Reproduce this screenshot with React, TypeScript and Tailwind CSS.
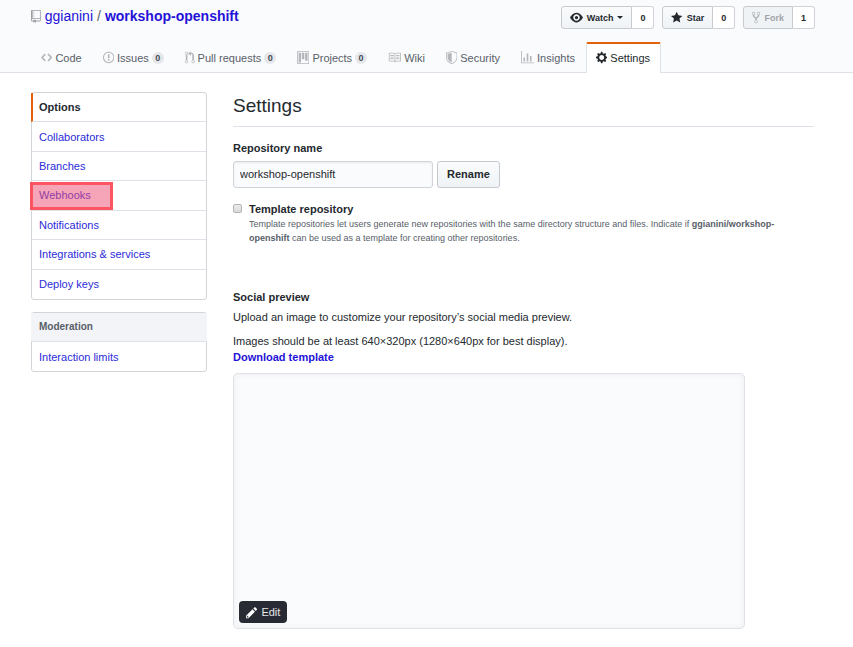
import type { ReactNode } from "react";

const icons = {
  repo: { w: 12, d: "M4 9H3V8h1v1zm0-3H3v1h1V6zm0-2H3v1h1V4zm0-2H3v1h1V2zm8-1v12c0 .55-.45 1-1 1H6v2l-1.5-1.5L3 16v-2H1c-.55 0-1-.45-1-1V1c0-.55.45-1 1-1h10c.55 0 1 .45 1 1zm-1 10H1v2h2v-1h3v1h5v-2zm0-10H2v9h9V1z" },
  code: { w: 14, d: "M9.5 3L8 4.5 11.5 8 8 11.5 9.5 13 14 8 9.5 3zm-5 0L0 8l4.5 5L6 11.5 2.5 8 6 4.5 4.5 3z" },
  issue: { w: 14, d: "M7 2.3c3.14 0 5.7 2.56 5.7 5.7s-2.56 5.7-5.7 5.7A5.71 5.71 0 0 1 1.3 8c0-3.14 2.56-5.7 5.7-5.7zM7 1C3.14 1 0 4.14 0 8s3.14 7 7 7 7-3.14 7-7-3.14-7-7-7zm1 3H6v5h2V4zm0 6H6v2h2v-2z" },
  pull: { w: 12, d: "M11 11.28V5c-.03-.78-.34-1.47-.94-2.06C9.46 2.35 8.78 2.03 8 2H7V0L4 3l3 3V4h1c.27.02.48.11.69.31.21.2.3.42.31.69v6.28A1.993 1.993 0 0 0 10 15a1.993 1.993 0 0 0 1-3.72zm-1 2.92c-.66 0-1.2-.55-1.2-1.2 0-.65.55-1.2 1.2-1.2.65 0 1.2.55 1.2 1.2 0 .65-.55 1.2-1.2 1.2zM4 3c0-1.11-.89-2-2-2a1.993 1.993 0 0 0-1 3.72v6.56A1.993 1.993 0 0 0 2 15a1.993 1.993 0 0 0 1-3.72V4.72c.59-.34 1-.98 1-1.72zm-.8 10c0 .66-.55 1.2-1.2 1.2-.65 0-1.2-.55-1.2-1.2 0-.65.55-1.2 1.2-1.2.65 0 1.2.55 1.2 1.2zM2 4.2C1.34 4.2.8 3.65.8 3c0-.65.55-1.2 1.2-1.2.65 0 1.2.55 1.2 1.2 0 .65-.55 1.2-1.2 1.2z" },
  project: { w: 15, d: "M10 12h3V2h-3v10zm-4-2h3V2H6v8zm-4 4h3V2H2v12zm-1 1h13V1H1v14zM14 0H1a1 1 0 0 0-1 1v14a1 1 0 0 0 1 1h13a1 1 0 0 0 1-1V1a1 1 0 0 0-1-1z" },
  book: { w: 16, d: "M3 5h4v1H3V5zm0 3h4V7H3v1zm0 2h4V9H3v1zm11-5h-4v1h4V5zm0 2h-4v1h4V7zm0 2h-4v1h4V9zm2-6v9c0 .55-.45 1-1 1H9.5l-1 1-1-1H2c-.55 0-1-.45-1-1V3c0-.55.45-1 1-1h5.5l1 1 1-1H15c.55 0 1 .45 1 1zm-8 .5L7.5 3H2v9h6V3.5zm7-.5H9.5l-.5.5V12h6V3z" },
  shield: { w: 14, d: "M0 2l7-2 7 2v6.02C14 12.69 8.69 16 7 16c-1.69 0-7-3.31-7-7.98V2zm1 .75L7 1l6 1.75v5.268C13 12.104 8.449 15 7 15c-1.449 0-6-2.896-6-6.982V2.75zm1 .75L7 2v12c-1.207 0-5-2.482-5-5.985V3.5z" },
  graph: { w: 16, d: "M16 14v1H0V0h1v14h15zM5 13H3V8h2v5zm4 0H7V3h2v10zm4 0h-2V6h2v7z" },
  gear: { w: 14, d: "M14 8.77v-1.6l-1.94-.64-.45-1.09.88-1.84-1.13-1.13-1.81.91-1.09-.45-.69-1.92h-1.6l-.63 1.94-1.11.45-1.84-.88-1.13 1.13.91 1.81-.45 1.09L0 7.23v1.59l1.94.64.45 1.09-.88 1.84 1.13 1.13 1.81-.91 1.09.45.69 1.92h1.59l.63-1.94 1.11-.45 1.84.88 1.13-1.13-.92-1.81.47-1.09L14 8.75v.02zM7 11c-1.66 0-3-1.34-3-3s1.34-3 3-3 3 1.34 3 3-1.34 3-3 3z" },
  eye: { w: 16, d: "M8.06 2C3 2 0 8 0 8s3 6 8.06 6C13 14 16 8 16 8s-3-6-7.94-6zM8 12c-2.2 0-4-1.78-4-4 0-2.2 1.8-4 4-4 2.22 0 4 1.8 4 4 0 2.22-1.78 4-4 4zm2-4c0 1.11-.89 2-2 2-1.11 0-2-.89-2-2 0-1.11.89-2 2-2 1.11 0 2 .89 2 2z" },
  star: { w: 14, d: "M14 6l-4.9-.64L7 1 4.9 5.36 0 6l3.6 3.26L2.67 14 7 11.67 11.33 14l-.93-4.74L14 6z" },
  fork: { w: 10, d: "M8 1a1.993 1.993 0 0 0-1 3.72V6L5 8 3 6V4.72A1.993 1.993 0 0 0 2 1a1.993 1.993 0 0 0-1 3.72V6.5l3 3v1.78A1.993 1.993 0 0 0 5 15a1.993 1.993 0 0 0 1-3.72V9.5l3-3V4.72A1.993 1.993 0 0 0 8 1zM2 4.2C1.34 4.2.8 3.65.8 3c0-.65.55-1.2 1.2-1.2.65 0 1.2.55 1.2 1.2 0 .65-.55 1.2-1.2 1.2zm3 10c-.66 0-1.2-.55-1.2-1.2 0-.65.55-1.2 1.2-1.2.65 0 1.2.55 1.2 1.2 0 .65-.55 1.2-1.2 1.2zm3-10c-.66 0-1.2-.55-1.2-1.2 0-.65.55-1.2 1.2-1.2.65 0 1.2.55 1.2 1.2 0 .65-.55 1.2-1.2 1.2z" },
  pencil: { w: 14, d: "M0 12v3h3l8-8-3-3-8 8zm3 2H1v-2h1v1h1v1zm10.3-9.3L12 6 9 3l1.3-1.3a.996.996 0 0 1 1.41 0l1.59 1.59c.39.39.39 1.02 0 1.41z" },
};
type IconName = keyof typeof icons;

function Icon({ name, className = "" }: { name: IconName; className?: string }) {
  const { w, d } = icons[name];
  return (
    <svg viewBox={`0 0 ${w} 16`} className={`h-[13px] w-auto shrink-0 ${className}`} fill="currentColor" fillRule="evenodd" aria-hidden="true">
      <path d={d} />
    </svg>
  );
}

const tabs: { label: string; icon: IconName; count?: number; active?: boolean }[] = [
  { label: "Code", icon: "code" },
  { label: "Issues", icon: "issue", count: 0 },
  { label: "Pull requests", icon: "pull", count: 0 },
  { label: "Projects", icon: "project", count: 0 },
  { label: "Wiki", icon: "book" },
  { label: "Security", icon: "shield" },
  { label: "Insights", icon: "graph" },
  { label: "Settings", icon: "gear", active: true },
];

function SocialButton({ icon, label, count, caret, disabled }: { icon: IconName; label: string; count: number; caret?: boolean; disabled?: boolean }) {
  return (
    <div className="flex h-[23px] text-[9px] font-bold">
      <button
        type="button"
        disabled={disabled}
        className={`flex items-center gap-1 rounded-l-[3px] border border-[#c8cacf] px-2 ${disabled ? "bg-[#eff3f6] text-[#a1a4aa]" : "bg-linear-to-b from-[#fafbfc] to-[#eff3f6] text-[#24292e]"}`}
      >
        <Icon name={icon} className={disabled ? "text-[#b0b3b8]" : ""} />
        {label}
        {caret && <span className="border-x-[3px] border-t-[3px] border-x-transparent border-t-current" />}
      </button>
      <a href="#count" className="flex w-[22px] items-center justify-center rounded-r-[3px] border border-l-0 border-[#d1d3d8] bg-white text-[#24292e]">
        {count}
      </a>
    </div>
  );
}

function MenuLink({ children, marked }: { children: ReactNode; marked?: boolean }) {
  return (
    <a href="#menu" className="relative flex items-center border-b border-[#dfe1e8] px-[7px] text-[#2b2bd8] last:border-b-0">
      {children}
      {marked && <span className="absolute top-px -left-[2px] h-7 w-[83px] border-[3px] border-[#ff3c46]/75 bg-[#ee4b72]/50" />}
    </a>
  );
}

export default function App() {
  return (
    <div className="font-['Liberation_Sans',Arial,sans-serif] text-[11px] leading-4 text-[#24292e]">
      <header className="border-b border-[#dfe1e8] bg-[#fafbfc] pr-[38px] pl-[31px]">
        <div className="flex h-[42px] items-start justify-between pt-[6px]">
          <h1 className="flex h-5 items-center gap-1 text-[14px]">
            <Icon name="repo" className="text-[#9b9ea5]" />
            <a href="#owner" className="text-[#2412d8]">ggianini</a>
            <span className="text-[#586069]">/</span>
            <a href="#repo" className="font-bold text-[#2412d8]">workshop-openshift</a>
          </h1>
          <div className="flex gap-2">
            <SocialButton icon="eye" label="Watch" count={0} caret />
            <SocialButton icon="star" label="Star" count={0} />
            <SocialButton icon="fork" label="Fork" count={1} disabled />
          </div>
        </div>
        <nav className="-mb-px flex h-[31px]" aria-label="Repository">
          {tabs.map((t) => (
            <a
              key={t.label}
              href="#tab"
              className={`flex items-center gap-[3px] border-x border-t-2 pr-[10px] pb-[2px] pl-[9px] ${t.active ? "rounded-t-[2px] border-x-[#dfe1e8] border-t-[#e36209] bg-white text-[#24292e]" : "border-transparent text-[#586069]"}`}
            >
              <Icon name={t.icon} className={t.active ? "" : "text-[#b4b6bb]"} />
              {t.label}
              {t.count !== undefined && (
                <span className="flex h-3 min-w-3 items-center justify-center rounded-full bg-[#e6e7ea] text-[9px] font-bold text-[#444d56]">{t.count}</span>
              )}
            </a>
          ))}
        </nav>
      </header>

      <div className="flex items-start gap-[26px] pt-[19px] pr-[39px] pb-4 pl-[31px]">
        <aside className="flex w-44 shrink-0 flex-col gap-3">
          <nav className="grid h-[208px] grid-rows-7 rounded-[3px] border border-[#d1d5da]" aria-label="Settings">
            <a href="#options" className="-ml-px flex items-center border-b border-l-2 border-b-[#dfe1e8] border-l-[#e36209] pl-[6px] font-bold">Options</a>
            <MenuLink>Collaborators</MenuLink>
            <MenuLink>Branches</MenuLink>
            <MenuLink marked>Webhooks</MenuLink>
            <MenuLink>Notifications</MenuLink>
            <MenuLink>Integrations &amp; services</MenuLink>
            <MenuLink>Deploy keys</MenuLink>
          </nav>
          <nav className="grid h-[60px] grid-rows-2 rounded-[3px] border border-[#d1d5da]" aria-label="Moderation">
            <h3 className="-mx-px flex items-center border-b border-[#dfe1e8] bg-[#f3f4f8] px-2 text-[10px] font-bold text-[#586069]">Moderation</h3>
            <MenuLink>Interaction limits</MenuLink>
          </nav>
        </aside>

        <main className="min-w-0 flex-1">
          <h2 className="border-b border-[#dfe1e8] pb-[6px] text-[19px] leading-7">Settings</h2>

          <form className="pt-[13px]" onSubmit={(e) => e.preventDefault()}>
            <label htmlFor="name" className="block font-bold">Repository name</label>
            <div className="mt-[5px] flex h-[27px] gap-1">
              <input id="name" defaultValue="workshop-openshift" className="w-[200px] rounded-[3px] border border-[#d1d5da] bg-[#fafbfc] px-[6px] pb-[2px] shadow-[inset_0_1px_2px_rgba(27,31,35,0.075)]" />
              <button type="submit" className="rounded-[3px] border border-[#c5c8cd] bg-linear-to-b from-[#fafbfc] to-[#eff3f6] px-[9px] pb-[2px] font-bold">Rename</button>
            </div>
            <div className="mt-[13px] flex items-start gap-[7px]">
              <input id="template" type="checkbox" className="mt-[3px] h-[9px] w-[9px] shrink-0 appearance-none rounded-[2px] border border-[#b4b4b4] bg-linear-to-b from-[#ececec] to-[#dadada]" />
              <div>
                <label htmlFor="template" className="block font-bold">Template repository</label>
                <p className="max-w-[560px] text-[9px] leading-[14px] text-[#586069]">
                  Template repositories let users generate new repositories with the same directory structure and files. Indicate if <strong>ggianini/workshop-openshift</strong> can be used as a template for creating other repositories.
                </p>
              </div>
            </div>
          </form>

          <section className="pt-11">
            <h3 className="font-bold">Social preview</h3>
            <p className="mt-1">Upload an image to customize your repository’s social media preview.</p>
            <p className="mt-2">Images should be at least 640×320px (1280×640px for best display).</p>
            <a href="#download" className="block font-bold text-[#2412d8]">Download template</a>
            <div className="mt-2 flex h-64 max-w-[512px] items-end rounded-[5px] border border-[#e1e1e9] bg-[#fafbfc] p-[5px] shadow-[inset_0_0_6px_rgba(27,31,35,0.06)]">
              <button type="button" className="flex h-[22px] items-center gap-1 rounded-[4px] bg-[#282b34] px-[7px] text-[#e6e7ea]">
                <Icon name="pencil" className="text-white" />
                Edit
              </button>
            </div>
          </section>
        </main>
      </div>
    </div>
  );
}
